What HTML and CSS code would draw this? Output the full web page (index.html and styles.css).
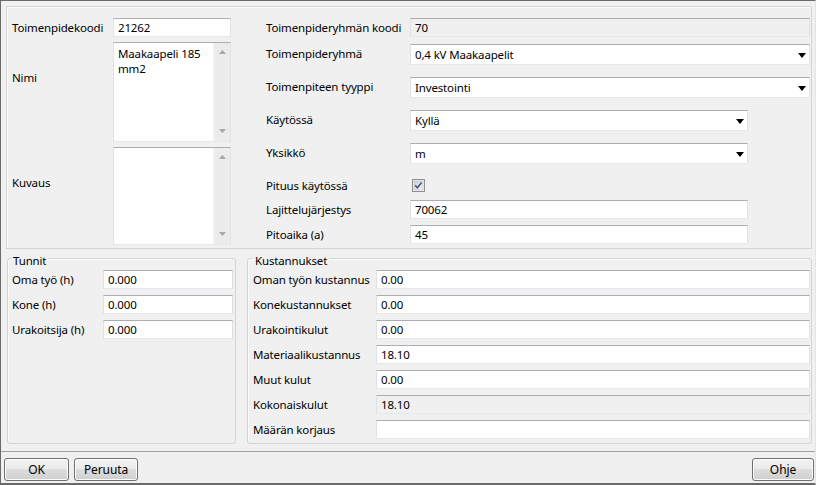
FILE: index.html
```html
<!DOCTYPE html>
<html lang="fi">
<head>
<meta charset="utf-8">
<title>Toimenpide</title>
<link rel="stylesheet" href="styles.css">
</head>
<body>
<div class="window">
  <div class="main">
    <section class="panel">
      <div class="lcol">
        <div class="row r-code">
          <span class="lbl lw-left">Toimenpidekoodi</span>
          <div class="field w-left">21262</div>
        </div>
        <div class="row-area r-nimi">
          <span class="lbl lw-left lbl-area">Nimi</span>
          <div class="textarea w-left h-nimi">
            <div class="ta-text">Maakaapeli 185<br>mm2</div>
            <div class="vscroll">
              <svg width="7" height="4" viewBox="0 0 7 4"><polygon points="0,4 7,4 3.5,0" fill="#a8a8a8"/></svg>
              <svg width="7" height="4" viewBox="0 0 7 4"><polygon points="0,0 7,0 3.5,4" fill="#a8a8a8"/></svg>
            </div>
          </div>
        </div>
        <div class="row-area r-kuvaus">
          <span class="lbl lw-left lbl-area">Kuvaus</span>
          <div class="textarea w-left h-kuvaus">
            <div class="ta-text"></div>
            <div class="vscroll">
              <svg width="7" height="4" viewBox="0 0 7 4"><polygon points="0,4 7,4 3.5,0" fill="#a8a8a8"/></svg>
              <svg width="7" height="4" viewBox="0 0 7 4"><polygon points="0,0 7,0 3.5,4" fill="#a8a8a8"/></svg>
            </div>
          </div>
        </div>
      </div>
      <div class="rcol">
        <div class="row r1">
          <span class="lbl lw-right">Toimenpideryhmän koodi</span>
          <div class="field readonly grow">70</div>
        </div>
        <div class="row sel r2">
          <span class="lbl lw-right">Toimenpideryhmä</span>
          <div class="field select grow"><span class="sel-text">0,4 kV Maakaapelit</span><svg class="arrow" width="8" height="5" viewBox="0 0 8 5"><polygon points="0,0 8,0 4,5" fill="#000"/></svg></div>
        </div>
        <div class="row sel r3">
          <span class="lbl lw-right">Toimenpiteen tyyppi</span>
          <div class="field select grow"><span class="sel-text">Investointi</span><svg class="arrow" width="8" height="5" viewBox="0 0 8 5"><polygon points="0,0 8,0 4,5" fill="#000"/></svg></div>
        </div>
        <div class="row sel r3">
          <span class="lbl lw-right">Käytössä</span>
          <div class="field select w-short"><span class="sel-text">Kyllä</span><svg class="arrow" width="8" height="5" viewBox="0 0 8 5"><polygon points="0,0 8,0 4,5" fill="#000"/></svg></div>
        </div>
        <div class="row sel r3">
          <span class="lbl lw-right">Yksikkö</span>
          <div class="field select w-short"><span class="sel-text">m</span><svg class="arrow" width="8" height="5" viewBox="0 0 8 5"><polygon points="0,0 8,0 4,5" fill="#000"/></svg></div>
        </div>
        <div class="row r-check">
          <span class="lbl lw-right">Pituus käytössä</span>
          <svg class="checkbox" width="13" height="13" viewBox="0 0 13 13">
            <defs>
              <linearGradient id="cbg" x1="0" y1="0" x2="1" y2="1">
                <stop offset="0" stop-color="#cbcfd5"/>
                <stop offset="1" stop-color="#f6f6f6"/>
              </linearGradient>
            </defs>
            <rect x="0.5" y="0.5" width="12" height="12" fill="#f4f4f4" stroke="#8f8f8f"/>
            <rect x="2" y="2" width="9" height="9" fill="url(#cbg)" stroke="#b9bcc2" stroke-width="0.6"/>
            <path d="M3.2 6.4 L5.4 8.8 L9.6 3.4" fill="none" stroke="#4b5b80" stroke-width="1.7"/>
          </svg>
        </div>
        <div class="row r7">
          <span class="lbl lw-right">Lajittelujärjestys</span>
          <div class="field w-short">70062</div>
        </div>
        <div class="row r8">
          <span class="lbl lw-right">Pitoaika (a)</span>
          <div class="field w-short">45</div>
        </div>
      </div>
    </section>
    <div class="groups">
      <fieldset class="group g-tunnit">
        <legend>Tunnit</legend>
        <div class="grow-row first">
          <span class="lbl lw-tunnit">Oma työ (h)</span>
          <div class="field w-tunnit">0.000</div>
        </div>
        <div class="grow-row">
          <span class="lbl lw-tunnit">Kone (h)</span>
          <div class="field w-tunnit">0.000</div>
        </div>
        <div class="grow-row">
          <span class="lbl lw-tunnit">Urakoitsija (h)</span>
          <div class="field w-tunnit">0.000</div>
        </div>
      </fieldset>
      <fieldset class="group g-kust">
        <legend>Kustannukset</legend>
        <div class="grow-row first">
          <span class="lbl lw-kust">Oman työn kustannus</span>
          <div class="field grow">0.00</div>
        </div>
        <div class="grow-row">
          <span class="lbl lw-kust">Konekustannukset</span>
          <div class="field grow">0.00</div>
        </div>
        <div class="grow-row">
          <span class="lbl lw-kust">Urakointikulut</span>
          <div class="field grow">0.00</div>
        </div>
        <div class="grow-row">
          <span class="lbl lw-kust">Materiaalikustannus</span>
          <div class="field grow">18.10</div>
        </div>
        <div class="grow-row">
          <span class="lbl lw-kust">Muut kulut</span>
          <div class="field grow">0.00</div>
        </div>
        <div class="grow-row">
          <span class="lbl lw-kust">Kokonaiskulut</span>
          <div class="field readonly grow">18.10</div>
        </div>
        <div class="grow-row">
          <span class="lbl lw-kust">Määrän korjaus</span>
          <div class="field grow"></div>
        </div>
      </fieldset>
    </div>
  </div>
  <div class="buttonbar">
    <button class="btn b-ok">OK</button>
    <button class="btn b-cancel">Peruuta</button>
    <button class="btn b-help">Ohje</button>
  </div>
</div>
</body>
</html>
```
FILE: styles.css
```css
* { box-sizing: border-box; }
html, body { margin: 0; padding: 0; }
body {
  width: 816px;
  height: 485px;
  overflow: hidden;
  background: #f0f0f0;
  font-family: "Noto Sans", "Open Sans", "DejaVu Sans", sans-serif;
  font-size: 11.5px;
  letter-spacing: -0.15px;
  color: #000;
}
.window {
  width: 816px;
  height: 485px;
  border-top: 1px solid #6a6a6a;
  border-left: 1px solid #6a6a6a;
  border-right: 1px solid #e4e4e4;
  border-bottom: 2px solid #6a6a6a;
  display: flex;
  flex-direction: column;
}
.main {
  padding: 5px 3px 7px 5px;
  border-bottom: 1px solid #a0a0a0;
}
.panel {
  height: 243px;
  border: 1px solid #d4d4d4;
  box-shadow: inset 1px 1px 0 #fafafa;
  display: flex;
}
.lbl {
  line-height: 15px;
  white-space: nowrap;
  flex: none;
}
.lw-left { width: 101px; }
.lw-right { width: 144px; }
.lw-tunnit { width: 91px; }
.lw-kust { width: 123px; }

.lcol {
  padding: 11px 0 0 5px;
  display: flex;
  flex-direction: column;
}
.rcol {
  flex: 1;
  margin-left: 35px;
  padding: 11px 1px 0 0;
  display: flex;
  flex-direction: column;
}
.row {
  display: flex;
  align-items: center;
  height: 19px;
}
.row.sel { height: 21px; }
.row.sel .lbl { padding-bottom: 3px; }
.r2 { margin-top: 7px; }
.r3 { margin-top: 12px; }
.r-check { margin-top: 11px; height: 20px; }
.r7 { margin-top: 5px; }
.r8 { margin-top: 6px; }

.row-area { display: flex; align-items: flex-start; }
.r-nimi { margin-top: 5px; }
.r-kuvaus { margin-top: 5px; }
.lbl-area { padding-top: 28px; }

.field {
  height: 19px;
  background: #fff;
  border: 1px solid;
  border-color: #abadb3 #dfe1e7 #e3e9ef #dfe1e7;
  padding: 0 4px;
  display: flex;
  align-items: center;
  white-space: nowrap;
  line-height: 15px;
}
.field.readonly { background: #f0f0f0; }
.field.select { height: 21px; padding-right: 3px; }
.sel-text { flex: 1; }
.arrow { flex: none; margin-top: 1px; }
.grow { flex: 1; }
.w-left { width: 118px; }
.w-short { width: 338px; }
.w-tunnit { width: 130px; }

.textarea {
  display: flex;
  background: #fff;
  border: 1px solid;
  border-color: #abadb3 #dfe1e7 #e3e9ef #dfe1e7;
}
.h-nimi { height: 100px; }
.h-kuvaus { height: 98px; }
.ta-text {
  flex: 1;
  padding: 3px 4px;
  line-height: 15px;
}
.vscroll {
  width: 17px;
  background: #ececec;
  border-left: 1px solid #f6f6f6;
  display: flex;
  flex-direction: column;
  justify-content: space-between;
  align-items: center;
  padding: 7px 0 8px;
}
.checkbox { margin-left: 2px; }

.groups {
  display: flex;
  margin-left: 1px;
  gap: 11px;
}
fieldset.group {
  margin: 0;
  min-width: 0;
  height: 195px;
  border: 1px solid #d4d4d4;
  border-radius: 3px;
  box-shadow: inset 1px 1px 0 #fafafa;
}
.g-tunnit { width: 229px; padding: 0 2px 4px 4px; }
.g-kust { flex: 1; padding: 0 1px 4px 5px; }
legend {
  padding: 4px 2px 0 1px;
  line-height: 15px;
}
.g-kust legend { padding-left: 2px; }
.grow-row {
  display: flex;
  align-items: center;
  height: 19px;
  margin-top: 6px;
}
.grow-row.first { margin-top: 2px; }

.buttonbar {
  flex: 1;
  display: flex;
  align-items: flex-start;
  padding: 6px 1px 0 3px;
  gap: 5px;
}
.btn {
  height: 23px;
  font-family: inherit;
  font-size: 12px;
  letter-spacing: -0.1px;
  color: #000;
  border: 1px solid #707070;
  border-radius: 3px;
  background: linear-gradient(#f2f2f2 0%, #ebebeb 49%, #dddddd 50%, #cfcfcf 100%);
  box-shadow: inset 0 0 0 1px #fcfcfc;
  padding: 0;
  line-height: 15px;
}
.b-ok { width: 65px; }
.b-cancel { width: 64px; }
.b-help { width: 62px; margin-left: auto; }
```
